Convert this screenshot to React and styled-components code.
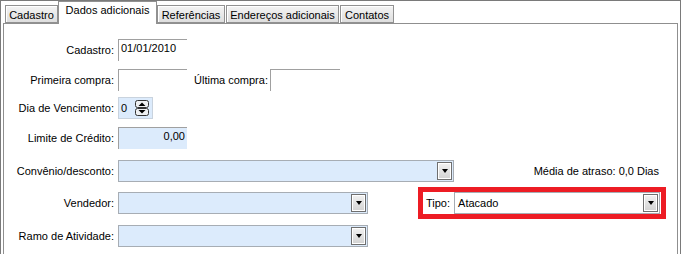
import React from 'react';
import styled, { createGlobalStyle } from 'styled-components';

const Global = createGlobalStyle`
  html, body {
    margin: 0;
    padding: 0;
    background: #ffffff;
  }
  body {
    font-family: "Liberation Sans", Arial, sans-serif;
    font-size: 11px;
    color: #000000;
  }
`;

const Frame = styled.div`
  width: 681px;
  height: 254px;
  box-sizing: border-box;
  border: 1px solid #7a7a7a;
  border-bottom: none;
  padding: 0 2px 0 2px;
  display: flex;
  flex-direction: column;
  overflow: hidden;
`;

const TabStrip = styled.div`
  display: flex;
  align-items: flex-end;
  height: 22px;
  padding-left: 2px;
  position: relative;
  z-index: 1;
`;

const Tab = styled.div`
  box-sizing: border-box;
  width: ${p => p.$w}px;
  height: ${p => (p.$active ? '23px' : '18px')};
  margin-bottom: ${p => (p.$active ? '-1px' : '0')};
  margin-right: ${p => p.$gap}px;
  padding-top: ${p => (p.$active ? '1px' : '2px')};
  border: 1px solid #919191;
  border-bottom: ${p => (p.$active ? 'none' : '1px solid #919191')};
  background: ${p => (p.$active ? '#ffffff' : 'linear-gradient(#f4f4f4, #dedede)')};
  box-shadow: ${p => (p.$active ? 'none' : 'inset 1px 1px 0 #ffffff')};
  line-height: 14px;
  text-align: center;
  white-space: nowrap;
  overflow: hidden;
`;

const Panel = styled.div`
  flex: 1;
  border: 1px solid #8f8f8f;
  border-bottom: none;
  padding-top: 15px;
  display: flex;
  flex-direction: column;
`;

const Row = styled.div`
  display: flex;
  align-items: center;
  height: 22px;
  margin-top: ${p => p.$top || 0}px;
`;

const Label = styled.div`
  width: ${p => p.$w || 110}px;
  margin-left: ${p => p.$left || 0}px;
  margin-right: 4px;
  text-align: right;
  white-space: nowrap;
  flex-shrink: 0;
`;

const TextField = styled.div`
  box-sizing: border-box;
  width: ${p => p.$w || 69}px;
  height: 22px;
  align-self: flex-start;
  border-top: 1px solid #a0a0a0;
  border-left: 1px solid #a0a0a0;
  background: ${p => (p.$blue ? '#dcebfc' : '#ffffff')};
  padding: 2px 2px 0 2px;
  line-height: 13px;
  text-align: ${p => (p.$right ? 'right' : 'left')};
`;

const SpinBox = styled.div`
  box-sizing: border-box;
  width: 35px;
  height: 22px;
  border: 1px solid #c9d3de;
  background: #dcebfc;
  display: flex;
  align-items: center;
  justify-content: space-between;
  padding: 0 3px 0 2px;
`;

const Combo = styled.div`
  box-sizing: border-box;
  width: ${p => p.$w}px;
  height: 22px;
  border: 1px solid #a7adb4;
  background: ${p => (p.$white ? '#ffffff' : '#dcebfc')};
  display: flex;
  align-items: center;
  justify-content: space-between;
  padding: 0 1px 0 3px;
  flex-shrink: 0;
`;

const DropButton = styled.span`
  box-sizing: border-box;
  width: 15px;
  height: 18px;
  border: 1px solid #6f6f6f;
  box-shadow: inset 1px 1px 0 #ffffff, inset -1px -1px 0 #ffffff;
  background: linear-gradient(#f2f2f2, #d2d2d2);
  display: flex;
  align-items: center;
  justify-content: center;
  &::after {
    content: '';
    border-left: 3.5px solid transparent;
    border-right: 3.5px solid transparent;
    border-top: 4px solid #000000;
  }
`;

const Info = styled.div`
  margin-left: auto;
  margin-right: 18px;
  white-space: nowrap;
`;

const Highlight = styled.div`
  box-sizing: border-box;
  height: 32px;
  margin-left: 50px;
  border: 5px solid #ed1c24;
  background: #ffffff;
  display: flex;
  align-items: center;
  padding-left: 3px;
  padding-right: 1px;
  flex-shrink: 0;
`;

const TipoLabel = styled.span`
  margin-right: 4px;
`;

function Spinner() {
  return (
    <svg width="14" height="16" viewBox="0 0 14 16">
      <rect x="0.5" y="0.5" width="13" height="7" rx="2" fill="#eef0f2" stroke="#333" />
      <rect x="0.5" y="8.5" width="13" height="7" rx="2" fill="#eef0f2" stroke="#333" />
      <path d="M3.5 6 L7 2.5 L10.5 6 Z" fill="#000" />
      <path d="M3.5 10 L7 13.5 L10.5 10 Z" fill="#000" />
    </svg>
  );
}

const tabs = [
  { name: 'Cadastro', w: 53, gap: 0 },
  { name: 'Dados adicionais', w: 99, gap: 0, active: true },
  { name: 'Referências', w: 68, gap: 1 },
  { name: 'Endereços adicionais', w: 113, gap: 1 },
  { name: 'Contatos', w: 54, gap: 0 },
];

export default function App() {
  return (
    <>
      <Global />
      <Frame>
        <TabStrip>
          {tabs.map(t => (
            <Tab key={t.name} $w={t.w} $gap={t.gap} $active={t.active}>{t.name}</Tab>
          ))}
        </TabStrip>
        <Panel>
          <Row>
            <Label>Cadastro:</Label>
            <TextField>01/01/2010</TextField>
          </Row>
          <Row $top={8}>
            <Label>Primeira compra:</Label>
            <TextField />
            <Label $w={72} $left={7}>Última compra:</Label>
            <TextField $w={70} />
          </Row>
          <Row $top={6}>
            <Label>Dia de Vencimento:</Label>
            <SpinBox>
              <span>0</span>
              <Spinner />
            </SpinBox>
          </Row>
          <Row $top={8}>
            <Label>Limite de Crédito:</Label>
            <TextField $blue $right>0,00</TextField>
          </Row>
          <Row $top={11}>
            <Label>Convênio/desconto:</Label>
            <Combo $w={336}>
              <span />
              <DropButton />
            </Combo>
            <Info>Média de atraso: 0,0 Dias</Info>
          </Row>
          <Row $top={10}>
            <Label>Vendedor:</Label>
            <Combo $w={250}>
              <span />
              <DropButton />
            </Combo>
            <Highlight>
              <TipoLabel>Tipo:</TipoLabel>
              <Combo $w={206} $white>
                <span>Atacado</span>
                <DropButton />
              </Combo>
            </Highlight>
          </Row>
          <Row $top={11}>
            <Label>Ramo de Atividade:</Label>
            <Combo $w={250}>
              <span />
              <DropButton />
            </Combo>
          </Row>
        </Panel>
      </Frame>
    </>
  );
}
